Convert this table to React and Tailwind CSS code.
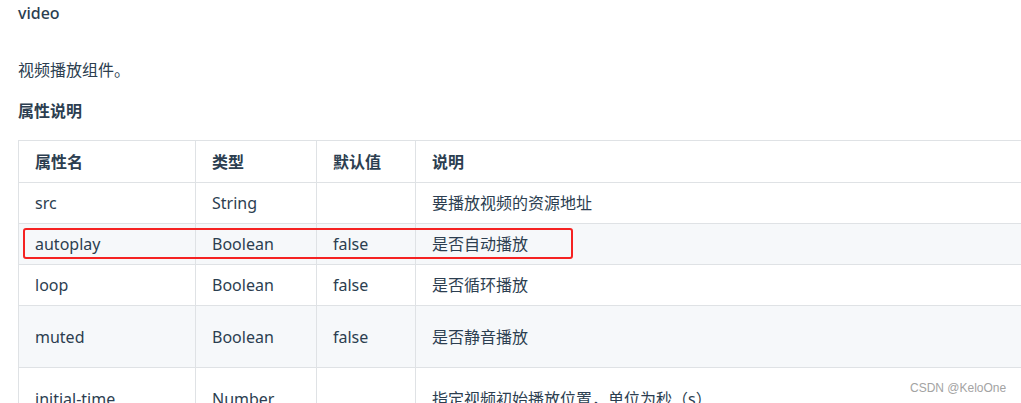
import React from 'react';

const rows = [
  { name: 'src', type: 'String', def: '', desc: '要播放视频的资源地址', h: 'h-[41px]' },
  { name: 'autoplay', type: 'Boolean', def: 'false', desc: '是否自动播放', h: 'h-[41px]' },
  { name: 'loop', type: 'Boolean', def: 'false', desc: '是否循环播放', h: 'h-[41px]' },
  { name: 'muted', type: 'Boolean', def: 'false', desc: '是否静音播放', h: 'h-[62px]' },
  { name: 'initial-time', type: 'Number', def: '', desc: '指定视频初始播放位置，单位为秒（s）', h: 'h-[62px]' },
];

const App = () => {
  return (
    <div
      className="relative w-[1021px] h-[403px] overflow-hidden bg-white text-[#2c3e50] text-[16px] leading-[22px]"
      style={{ fontFamily: '"Noto Sans", "Noto Sans CJK SC", sans-serif' }}
    >
      <div className="pl-[18px] pt-[2px] flex flex-col">
        <div className="font-medium">video</div>
        <p className="mt-[35px]">视频播放组件。</p>
        <h3 className="mt-[19px] font-bold">属性说明</h3>

        {/* props table */}
        <table className="mt-[18px] w-[1100px] table-fixed border-collapse">
          <colgroup>
            <col className="w-[177px]" />
            <col className="w-[121px]" />
            <col className="w-[99px]" />
            <col />
          </colgroup>
          <thead>
            <tr className="h-[42px] bg-white">
              <th className="border border-[#dfe2e5] px-4 text-left font-bold">属性名</th>
              <th className="border border-[#dfe2e5] px-4 text-left font-bold">类型</th>
              <th className="border border-[#dfe2e5] px-4 text-left font-bold">默认值</th>
              <th className="border border-[#dfe2e5] px-4 text-left font-bold">说明</th>
            </tr>
          </thead>
          <tbody>
            {rows.map((r, i) => (
              <tr key={r.name} className={`${r.h} ${i % 2 === 1 ? 'bg-[#f6f8fa]' : 'bg-white'}`}>
                <td className="border border-[#dfe2e5] px-4">{r.name}</td>
                <td className="border border-[#dfe2e5] px-4">{r.type}</td>
                <td className="border border-[#dfe2e5] px-4">{r.def}</td>
                <td className="border border-[#dfe2e5] px-4">{r.desc}</td>
              </tr>
            ))}
          </tbody>
        </table>
      </div>

      {/* highlight box */}
      <div className="absolute left-[23px] top-[228px] w-[550px] h-[31px] border-2 border-[#f52222] rounded-[3px]" />

      {/* watermark */}
      <div
        className="absolute left-[910px] top-[381px] text-[12px] leading-[15px] text-[#a3a3a3]"
        style={{ fontFamily: '"Liberation Sans", Arial, sans-serif' }}
      >
        CSDN @KeloOne
      </div>
    </div>
  );
};

export default App;
